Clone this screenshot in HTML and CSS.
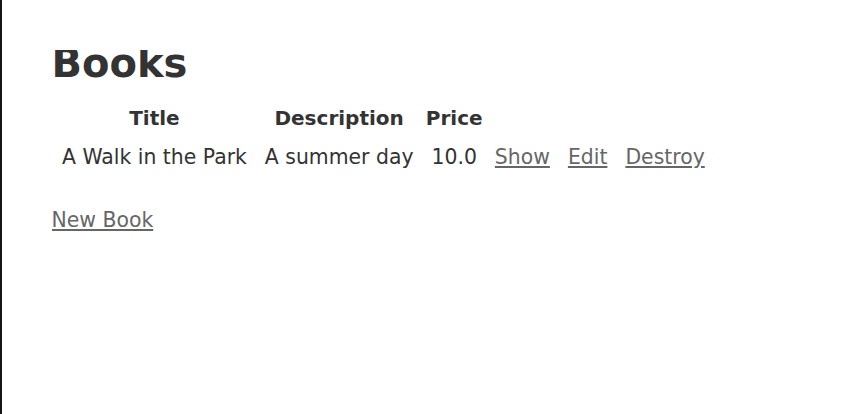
FILE: index.html
```html
<!DOCTYPE html>
<html class="page">
<head>
<meta charset="utf-8">
<title>Books</title>
<link rel="stylesheet" href="styles.css">
</head>
<body class="body">
<h1 class="heading">Books</h1>
<table class="books">
  <thead>
    <tr>
      <th>Title</th>
      <th>Description</th>
      <th>Price</th>
      <th colspan="3"></th>
    </tr>
  </thead>
  <tbody>
    <tr>
      <td>A Walk in the Park</td>
      <td>A summer day</td>
      <td>10.0</td>
      <td><a class="link" href="#">Show</a></td>
      <td><a class="link" href="#">Edit</a></td>
      <td><a class="link" href="#">Destroy</a></td>
    </tr>
  </tbody>
</table>
<br>
<a class="link" href="#">New Book</a>
</body>
</html>
```
FILE: styles.css
```css
.page {
  border-left: 2px solid #151515;
  min-height: 100%;
  box-sizing: border-box;
}

.body {
  background-color: #fff;
  color: #333;
  font-family: "DejaVu Sans", Verdana, sans-serif;
  font-size: 20.4px;
  line-height: 27px;
  margin: 49.5px;
}

.heading {
  font-size: 40px;
  margin: 0 0 25px;
}

.books {
  border-spacing: 3px;
}

.books th {
  font-size: 20px;
  padding: 0 0 9.5px;
}

.books td {
  padding: 0 7.5px 6px;
}

.link {
  color: #666;
}
```
